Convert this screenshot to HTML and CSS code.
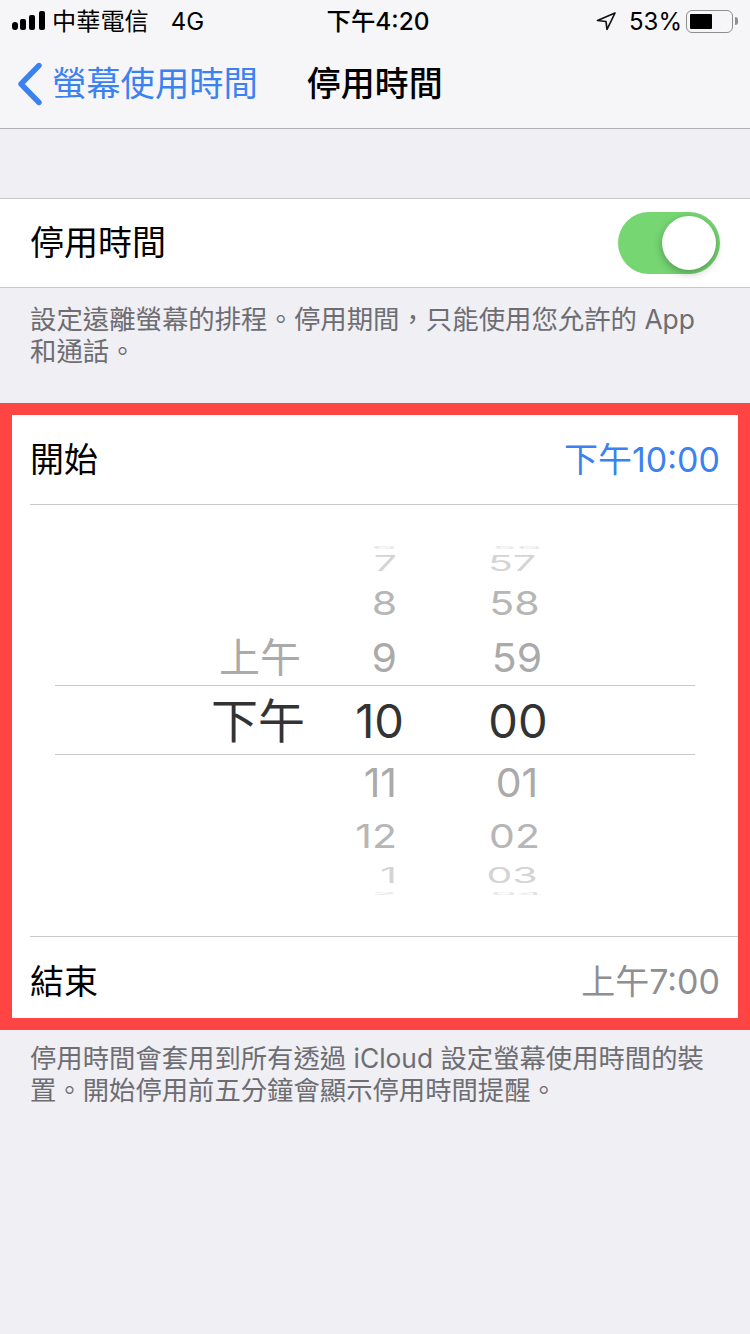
FILE: index.html
```html
<!DOCTYPE html>
<html>
<head>
  <title>停用時間</title>
  <meta charset="utf-8">
  <link rel="stylesheet" href="styles.css">
</head>
<body>

  <!-- Header -->
  <div class="header">
    <div class="status-bar">
      <div class="status-left">
        <svg class="signal" width="34" height="20" viewBox="0 0 34 20">
          <rect x="0" y="11" width="6" height="8" rx="3"/>
          <rect x="8" y="8" width="6" height="11" rx="2"/>
          <rect x="17" y="4" width="6" height="15" rx="2"/>
          <rect x="27" y="0" width="6" height="19" rx="2"/>
        </svg>
        <span class="carrier">中華電信</span>
        <span class="network">4G</span>
      </div>
      <div class="status-time">下午4:20</div>
      <div class="status-right">
        <svg class="arrow" width="20" height="20" viewBox="0 0 20 20">
          <path d="M19 2 L1.5 9.5 L10 10.5 L11 18.5 Z" fill="none" stroke="#111" stroke-width="1.7" stroke-linejoin="round"/>
        </svg>
        <span class="battery-pct">53%</span>
        <div class="battery"><div class="battery-fill"></div></div>
        <div class="battery-tip"></div>
      </div>
    </div>
    <div class="nav-bar">
      <svg class="chevron" width="26" height="44" viewBox="0 0 26 44">
        <path d="M22 3.5 L4 22 L22 40.5" fill="none" stroke="#3b82f0" stroke-width="5.4" stroke-linecap="round" stroke-linejoin="round"/>
      </svg>
      <span class="nav-back">螢幕使用時間</span>
      <span class="nav-title">停用時間</span>
    </div>
  </div>

  <div class="row row-toggle">
    <span class="row-label">停用時間</span>
    <div class="toggle"><div class="knob"></div></div>
  </div>
  <p class="note note-top">設定遠離螢幕的排程。停用期間，只能使用您允許的 App 和通話。</p>

  <!-- Highlighted schedule -->
  <div class="frame">
    <div class="cell cell-start">
      <span>開始</span>
      <span class="value-blue">下午10:00</span>
    </div>

    <div class="picker">
      <div class="wheel">
        <div class="wheel-row r-edge-top"><span></span><span class="hr"><i>6</i></span><span class="min"><i>56</i></span></div>
        <div class="wheel-row r-far r7"><span></span><span class="hr"><i>7</i></span><span class="min"><i>57</i></span></div>
        <div class="wheel-row r-mid r8"><span></span><span class="hr"><i>8</i></span><span class="min"><i>58</i></span></div>
        <div class="wheel-row r-near r9"><span class="ap"><i>上午</i></span><span class="hr"><i>9</i></span><span class="min"><i>59</i></span></div>
        <div class="wheel-row r-sel"><span class="ap"><i>下午</i></span><span class="hr"><i>10</i></span><span class="min"><i>00</i></span></div>
        <div class="wheel-row r-near r11"><span></span><span class="hr"><i>11</i></span><span class="min"><i>01</i></span></div>
        <div class="wheel-row r-mid r12"><span></span><span class="hr"><i>12</i></span><span class="min"><i>02</i></span></div>
        <div class="wheel-row r-far r1"><span></span><span class="hr"><i>1</i></span><span class="min"><i>03</i></span></div>
        <div class="wheel-row r-edge-bottom"><span></span><span class="hr"><i>2</i></span><span class="min"><i>04</i></span></div>
      </div>
    </div>

    <div class="cell cell-end">
      <span>結束</span>
      <span class="value-gray">上午7:00</span>
    </div>
  </div>

  <p class="note note-bottom">停用時間會套用到所有透過 iCloud 設定螢幕使用時間的裝置。開始停用前五分鐘會顯示停用時間提醒。</p>

</body>
</html>
```

FILE: styles.css
```css
body {
  margin: 0;
  width: 750px;
  height: 1334px;
  overflow: hidden;
  background-color: #efeff4;
  color: #000;
  font-family: Inter, "Noto Sans CJK TC", sans-serif;
}

/* Header */
.header {
  height: 128px;
  background-color: #f6f6f8;
  border-bottom: 1px solid #b2b2b6;
}

.status-bar {
  height: 42px;
  padding: 0 12px;
  display: grid;
  grid-template-columns: 1fr auto 1fr;
  align-items: center;
  font-size: 24px;
}

.status-left, .status-right {
  display: flex;
  align-items: center;
}

.status-right {
  justify-content: flex-end;
}

.signal {
  fill: #000;
}

.carrier {
  margin-left: 6px;
  padding-bottom: 3px;
  font-size: 24.2px;
}

.network {
  margin-left: 22px;
}

.status-time {
  margin-left: 6px;
  padding-bottom: 4px;
  font-size: 24.4px;
  font-weight: 500;
}

.battery-pct {
  margin-left: 13px;
}

.battery {
  width: 47px;
  height: 23px;
  margin-left: 4px;
  padding: 3px;
  box-sizing: border-box;
  border: 1.5px solid #8e8e8e;
  border-radius: 6px;
}

.battery-fill {
  width: 22px;
  height: 100%;
  background-color: #000;
  border-radius: 1px;
}

.battery-tip {
  width: 3px;
  height: 8px;
  margin-left: 2px;
  background-color: #8e8e8e;
  border-radius: 0 3px 3px 0;
}

.nav-bar {
  height: 84px;
  padding-left: 17px;
  padding-bottom: 2px;
  display: flex;
  align-items: center;
  font-size: 34px;
}

.nav-back {
  margin-left: 9px;
  padding-bottom: 6px;
  font-size: 34.3px;
  color: #3b82f0;
}

.nav-title {
  margin-left: 49px;
  padding-bottom: 6px;
  font-weight: 500;
}

/* Rows */
.row {
  margin-top: 69px;
  height: 88px;
  padding: 0 30px;
  display: flex;
  align-items: center;
  justify-content: space-between;
  background-color: #fff;
  border-top: 1px solid #c8c7cc;
  border-bottom: 1px solid #c8c7cc;
  font-size: 34px;
}

.row-label {
  padding-bottom: 5px;
}

.toggle {
  width: 102px;
  height: 62px;
  padding: 4px;
  box-sizing: border-box;
  display: flex;
  justify-content: flex-end;
  background-color: #76d672;
  border-radius: 31px;
}

.knob {
  width: 54px;
  height: 54px;
  background-color: #fff;
  border-radius: 50%;
  box-shadow: 0 3px 8px rgba(0, 0, 0, 0.3);
}

.note {
  margin: 0;
  padding: 15px 30px 0;
  font-size: 26.4px;
  line-height: 32px;
  color: #6d6d72;
}

.note-top {
  height: 100px;
}

.frame {
  height: 627px;
  box-sizing: border-box;
  border: 12px solid #ff4444;
  background-color: #fff;
}

.cell {
  display: flex;
  align-items: center;
  justify-content: space-between;
  padding-left: 18px;
  padding-right: 18px;
  box-sizing: border-box;
  font-size: 34px;
}

.cell-start {
  height: 89px;
  padding-bottom: 4px;
}

.cell-end {
  height: 81px;
  padding-top: 4px;
}

.value-blue {
  color: #3b82f0;
}

.value-gray {
  color: #8e8e93;
}

/* Picker */
.picker {
  height: 433px;
  margin-left: 18px;
  padding-top: 40px;
  box-sizing: border-box;
  border-top: 1px solid #c8c7cc;
  border-bottom: 1px solid #c8c7cc;
}

.wheel {
  width: 640px;
  margin-left: 25px;
}

.wheel-row {
  display: grid;
  grid-template-columns: 250px 100px 226px;
  grid-template-rows: minmax(0, 1fr);
  align-items: center;
  font-size: 41px;
  line-height: 1;
  color: #aaa;
}

.wheel-row i {
  display: inline-block;
  font-style: normal;
  transform: scaleY(var(--squash));
}

.ap {
  text-align: right;
  padding-right: 4px;
}

.hr {
  text-align: right;
  padding-right: 8px;
}

.min {
  text-align: center;
  padding-right: 2px;
}

.r-edge-top, .r-edge-bottom {
  --squash: 0.1;
  color: #e2e2e2;
  overflow: hidden;
}

.r-edge-top {
  height: 5px;
}

.r-edge-bottom {
  height: 8px;
  padding-top: 4px;
  box-sizing: border-box;
}

.r-far {
  --squash: 0.52;
  color: #d4d4d4;
}

.r-mid {
  --squash: 0.8;
  color: #b6b6b6;
}

.r-near {
  --squash: 0.97;
}

.r7 {
  height: 27px;
}

.r8 {
  height: 52px;
}

.r9 {
  height: 56px;
}

.r11 {
  height: 55px;
}

.r12 {
  height: 53px;
}

.r1 {
  height: 24px;
}

.r7 .min, .r1 .min {
  padding-right: 12px;
}

.r8 .min, .r12 .min {
  padding-right: 7px;
}

.r-sel {
  --squash: 1;
  height: 70px;
  box-sizing: border-box;
  border-top: 1px solid #c8c7cc;
  border-bottom: 1px solid #c8c7cc;
  font-size: 47px;
  color: #333;
}

.r-sel .ap, .r-sel .min {
  padding-right: 0;
}

.r-sel .hr {
  padding-right: 1px;
}

.note-bottom {
  padding-top: 12px;
  font-size: 26.35px;
}
```
